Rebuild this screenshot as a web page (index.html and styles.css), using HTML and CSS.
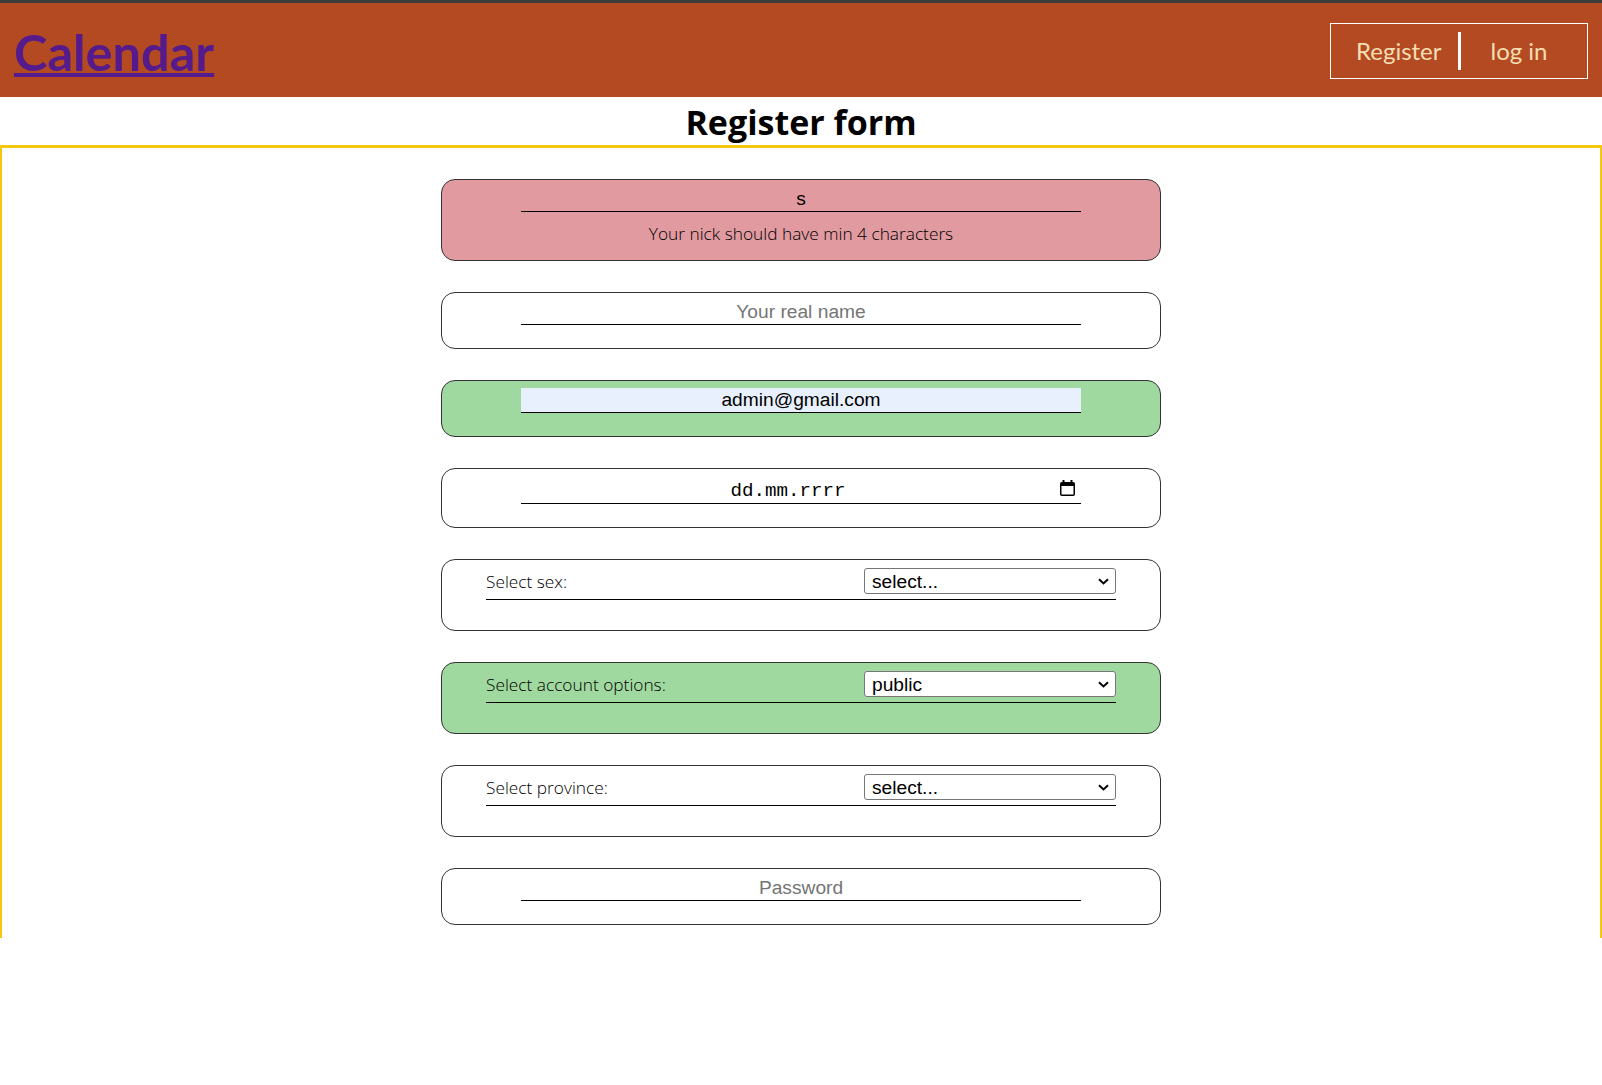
FILE: index.html
```html
<!DOCTYPE html>
<html lang="pl">
<head>
<meta charset="utf-8">
<title>Calendar - Register</title>
<link rel="stylesheet" href="styles.css">
</head>
<body>
<header class="topbar">
  <a class="brand" href="#">Calendar</a>
  <nav class="auth">
    <a class="auth-link auth-register" href="#">Register</a>
    <span class="auth-sep"></span>
    <a class="auth-link auth-login" href="#">log in</a>
  </nav>
</header>
<h1 class="page-title">Register form</h1>
<main class="frame">
  <form class="form">
    <div class="field field-error">
      <input class="text-in" type="text" value="s">
      <p class="err-msg">Your nick should have min 4 characters</p>
    </div>
    <div class="field">
      <input class="text-in" type="text" placeholder="Your real name">
    </div>
    <div class="field field-ok">
      <input class="text-in text-autofill" type="text" value="admin@gmail.com">
    </div>
    <div class="field field-date">
      <div class="date-in">
        <span class="date-text">dd.mm.rrrr</span>
        <svg class="date-icon" width="15" height="16" viewBox="0 0 15 16">
          <rect x="2.5" y="0" width="2" height="3" fill="#000"/>
          <rect x="10.5" y="0" width="2" height="3" fill="#000"/>
          <rect x="0.75" y="2.75" width="13.5" height="12.5" rx="1" fill="none" stroke="#000" stroke-width="1.5"/>
          <rect x="1" y="3" width="13" height="3" fill="#000"/>
        </svg>
      </div>
    </div>
    <div class="field field-select">
      <label class="sel-row">
        <span class="sel-label">Select sex:</span>
        <span class="sel-wrap">
          <select class="sel"><option>select...</option><option>male</option><option>female</option></select>
          <svg class="sel-arrow" width="11" height="7" viewBox="0 0 11 7"><path d="M1 1.2 L5.5 5.4 L10 1.2" fill="none" stroke="#000" stroke-width="2"/></svg>
        </span>
      </label>
    </div>
    <div class="field field-select field-ok">
      <label class="sel-row">
        <span class="sel-label">Select account options:</span>
        <span class="sel-wrap">
          <select class="sel"><option>public</option><option>private</option></select>
          <svg class="sel-arrow" width="11" height="7" viewBox="0 0 11 7"><path d="M1 1.2 L5.5 5.4 L10 1.2" fill="none" stroke="#000" stroke-width="2"/></svg>
        </span>
      </label>
    </div>
    <div class="field field-select">
      <label class="sel-row">
        <span class="sel-label">Select province:</span>
        <span class="sel-wrap">
          <select class="sel"><option>select...</option></select>
          <svg class="sel-arrow" width="11" height="7" viewBox="0 0 11 7"><path d="M1 1.2 L5.5 5.4 L10 1.2" fill="none" stroke="#000" stroke-width="2"/></svg>
        </span>
      </label>
    </div>
    <div class="field">
      <input class="text-in" type="password" placeholder="Password">
    </div>
  </form>
</main>
</body>
</html>
```
FILE: styles.css
```css
* { box-sizing: border-box; }
html, body { margin: 0; padding: 0; background: #fff; }
body { font-family: Lato, "Open Sans", sans-serif; color: #000; }

.topbar {
  height: 97px;
  border-top: 3px solid #3c3c3c;
  background: #b34a22;
  display: flex;
  align-items: center;
  justify-content: space-between;
  padding: 0 14px;
}
.brand {
  font-family: Lato, sans-serif;
  font-weight: 700;
  font-size: 50.5px;
  color: #551a8b;
  text-decoration: underline;
  text-decoration-thickness: 4px;
  text-underline-offset: 2px;
  line-height: 1;
  margin-top: 4px;
}
.auth {
  display: flex;
  align-items: center;
  height: 56px;
  width: 258px;
  border: 1px solid #fff;
  margin-top: 2px;
}
.auth-link {
  font-family: Lato, sans-serif;
  font-size: 24px;
  color: #f5deb3;
  text-decoration: none;
  line-height: 1;
}
.auth-register { padding: 0 16px 0 25px; }
.auth-login { padding: 0 0 0 30px; }
.auth-sep {
  display: block;
  width: 3px;
  height: 38px;
  background: #fff;
}

.page-title {
  margin: 0;
  height: 48px;
  line-height: 50px;
  font-family: "Open Sans", sans-serif;
  font-size: 34px;
  font-weight: 700;
  text-align: center;
}

.frame {
  height: 793px;
  border-top: 3px solid #f2c90f;
  border-left: 2px solid #f2c90f;
  border-right: 2px solid #f2c90f;
  padding-top: 31px;
}
.form {
  width: 720px;
  margin: 0 auto;
  display: flex;
  flex-direction: column;
  gap: 31px;
}
.field {
  border: 1px solid #333;
  border-radius: 14px;
  padding: 7px 44px 23px;
  background: #fff;
}
.field-error { background: #e19aa0; padding-bottom: 15px; }
.field-ok { background: #a0d99f; }
.field-date { padding-bottom: 23px; }

.text-in {
  display: block;
  width: 560px;
  height: 25px;
  margin: 0 auto;
  padding: 0;
  border: none;
  border-bottom: 1px solid #000;
  background: transparent;
  text-align: center;
  font-family: "Liberation Sans", Arial, sans-serif;
  font-size: 19.2px;
  color: #000;
  outline: none;
}
.text-in::placeholder { color: #757575; }
.text-autofill { background: #e8f0fe; }

.err-msg {
  margin: 11px 0 0;
  line-height: 22px;
  text-align: center;
  font-family: "Open Sans", sans-serif;
  font-weight: 300;
  font-size: 17.3px;
  color: #000;
}

.date-in {
  width: 560px;
  height: 28px;
  margin: 0 auto;
  border-bottom: 1px solid #000;
  display: flex;
  align-items: center;
}
.date-text {
  flex: 1;
  text-align: center;
  font-family: "Liberation Mono", "DejaVu Sans Mono", monospace;
  font-size: 19.2px;
  padding-top: 2px;
}
.date-icon { margin: 0 6px 3px 5px; }

.field-select { padding-top: 8px; padding-bottom: 30px; }
.sel-row {
  display: flex;
  align-items: center;
  justify-content: space-between;
  border-bottom: 1px solid #000;
  padding-bottom: 5px;
}
.sel-label {
  font-family: "Open Sans", sans-serif;
  font-weight: 300;
  font-size: 17.3px;
  color: #000;
}
.sel-wrap {
  position: relative;
  display: block;
  width: 252px;
  height: 26px;
}
.sel {
  -webkit-appearance: none;
  appearance: none;
  display: block;
  width: 100%;
  height: 26px;
  margin: 0;
  padding: 0 0 0 7px;
  border: 1px solid #767676;
  border-radius: 3px;
  background: #fff;
  font-family: "Liberation Sans", Arial, sans-serif;
  font-size: 19.2px;
  color: #000;
}
.sel-arrow {
  position: absolute;
  right: 7px;
  top: 10px;
  pointer-events: none;
}
```
